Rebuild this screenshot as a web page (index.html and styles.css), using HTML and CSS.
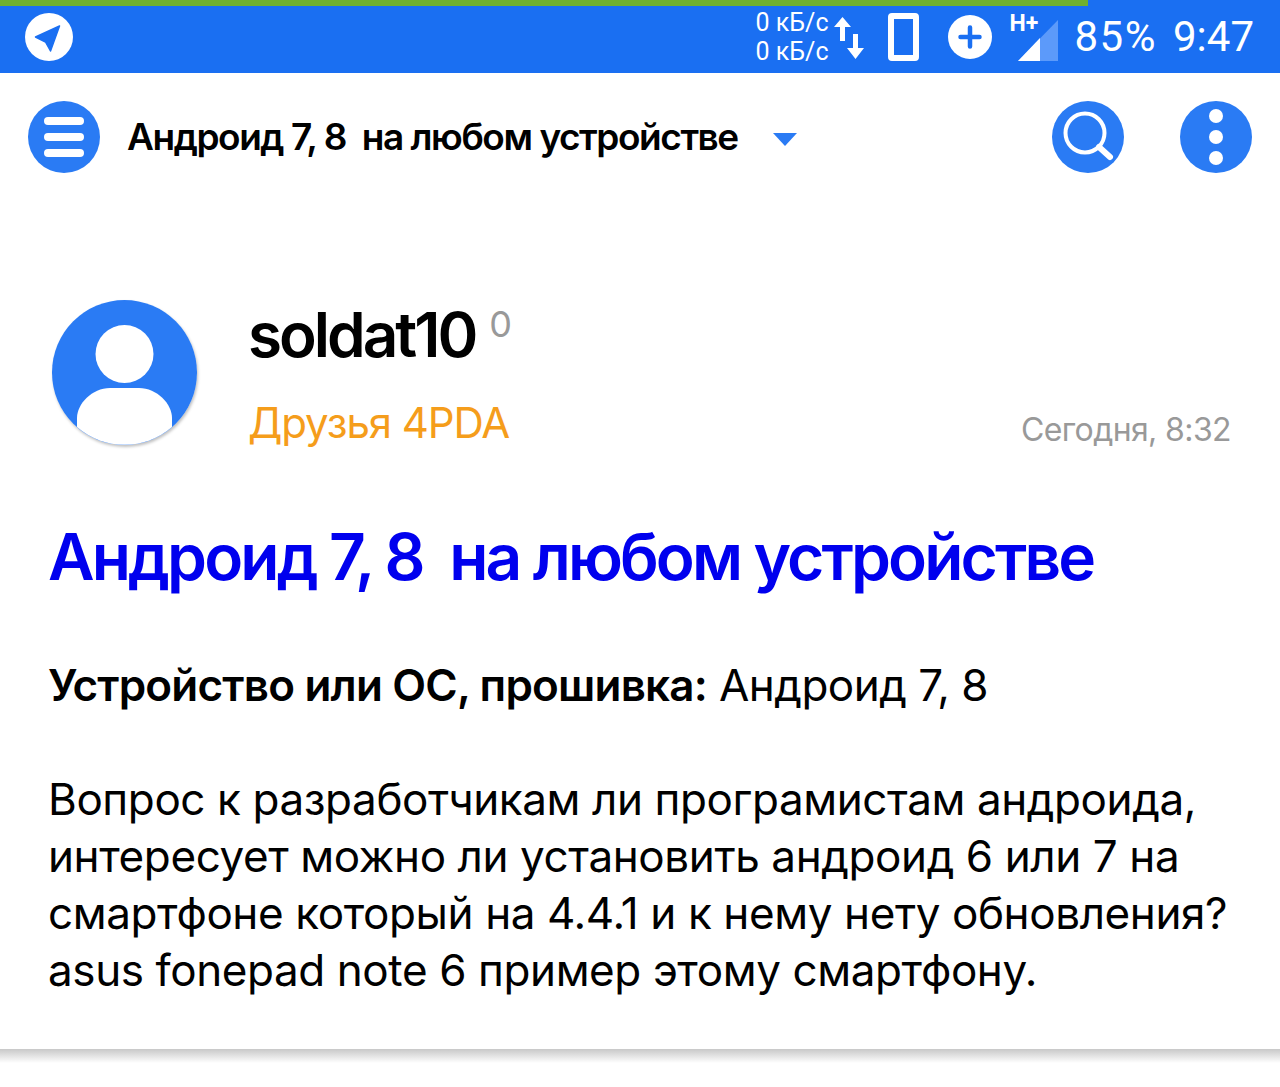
FILE: index.html
```html
<!DOCTYPE html>
<html lang="ru">
<head>
    <meta charset="UTF-8">
    <meta name="viewport" content="width=device-width, initial-scale=1.0">
    <title>Андроид 7, 8 на любом устройстве</title>
    <link rel="stylesheet" href="styles.css">
</head>
<body>
    <div class="status-bar">
        <div class="progress"><div class="progress-fill"></div></div>
        <div class="status-row">
            <svg class="status-nav" width="50" height="50" viewBox="0 0 50 50">
                <circle cx="25" cy="25" r="24" fill="#fff"/>
                <path d="M35.500 14 L11.500 25 L21.500 30 L26.500 39 Z" fill="#1a6ff2" stroke="#1a6ff2" stroke-width="1.500" stroke-linejoin="round"/>
            </svg>
            <div class="status-right">
                <div class="net-speed"><span>0 кБ/с</span><span>0 кБ/с</span></div>
                <svg class="net-arrows" width="30" height="44" viewBox="0 0 30 44">
                    <path d="M8.500 2 L17 12 H11 V26 H6 V12 H0 Z M19 19 H24 V33 H30 L21.500 44 L13 33 H19 Z" fill="#fff"/>
                </svg>
                <div class="phone-icon"></div>
                <svg class="saver-icon" width="44" height="44" viewBox="0 0 44 44">
                    <circle cx="22" cy="22" r="22" fill="#fff"/>
                    <path d="M22 12.500 V31.500 M12.500 22 H31.500" stroke="#1a6ff2" stroke-width="4.500" stroke-linecap="round"/>
                </svg>
                <div class="signal">
                    <span class="signal-type">H+</span>
                    <svg width="40" height="41" viewBox="0 0 40 41">
                        <path d="M40 0 V41 H0 Z" fill="#5c9afa"/>
                        <path d="M22 18 V41 H0 Z" fill="#fff"/>
                    </svg>
                </div>
                <span class="status-text percent">85%</span>
                <span class="status-text">9:47</span>
            </div>
        </div>
    </div>

    <div class="toolbar">
        <div class="round-btn menu-btn"><span></span><span></span><span></span></div>
        <div class="toolbar-title">Андроид 7, 8  на любом устройстве</div>
        <div class="dropdown-caret"></div>
        <div class="toolbar-actions">
            <div class="round-btn">
                <svg width="72" height="72" viewBox="0 0 72 72">
                    <circle cx="33" cy="32" r="19.500" fill="none" stroke="#fff" stroke-width="4"/>
                    <path d="M47 46 L58 56" stroke="#fff" stroke-width="6" stroke-linecap="round"/>
                </svg>
            </div>
            <div class="round-btn dots-btn"><span></span><span></span><span></span></div>
        </div>
    </div>

    <div class="post">
        <div class="post-head">
            <div class="avatar">
                <svg width="145" height="145" viewBox="0 0 145 145">
                    <circle cx="72.500" cy="72.500" r="72.500" fill="#2a7bf4"/>
                    <circle cx="72.500" cy="54" r="29" fill="#fff"/>
                    <path d="M25 127 V118 C25 104 40 88 58 88 H87 C105 88 120 104 120 118 V127 A72.500 72.500 0 0 1 25 127 Z" fill="#fff"/>
                </svg>
            </div>
            <div class="author">
                <div class="author-name">soldat10<sup class="author-rep">0</sup></div>
                <div class="author-group">Друзья 4PDA</div>
            </div>
            <div class="post-date">Сегодня, 8:32</div>
        </div>
        <h1 class="post-title">Андроид 7, 8  на любом устройстве</h1>
        <p class="post-device"><strong>Устройство или ОС, прошивка:</strong> Андроид 7, 8</p>
        <p class="post-text">Вопрос к разработчикам ли програмистам андроида,<br>интересует можно ли установить андроид 6 или 7 на<br>смартфоне который на 4.4.1 и к нему нету обновления?<br>asus fonepad note 6 пример этому смартфону.</p>
    </div>
    <div class="post-shadow"></div>
</body>
</html>
```

FILE: styles.css
```css
* {
    margin: 0;
    padding: 0;
    box-sizing: border-box;
}

body {
    font-family: Inter, Roboto, sans-serif;
    background: white;
    color: #000;
    overflow: hidden;
}

.status-bar {
    height: 73px;
    background: #1a6ff2;
    color: white;
    font-family: Roboto, sans-serif;
}

.progress {
    height: 6px;
}

.progress-fill {
    width: 85%;
    height: 100%;
    background: #6fb02f;
}

.status-row {
    display: flex;
    align-items: center;
    justify-content: space-between;
    padding: 0 26px 0 24px;
    height: 62px;
}

.status-right {
    display: flex;
    align-items: center;
}

.net-speed {
    display: flex;
    flex-direction: column;
    font-size: 25px;
    line-height: 29px;
    margin-right: 5px;
}

.net-arrows {
    margin-right: 24px;
}

.phone-icon {
    width: 31px;
    height: 48px;
    border: 6px solid white;
    border-radius: 4px;
    margin-right: 29px;
}

.saver-icon {
    margin-right: 18px;
}

.signal {
    position: relative;
    width: 48px;
    height: 48px;
    display: flex;
    align-items: flex-end;
    justify-content: flex-end;
    margin-right: 17px;
}

.signal-type {
    position: absolute;
    left: 0;
    top: 0;
    font-size: 23px;
    line-height: 22px;
    font-weight: 700;
}

.status-text {
    font-size: 42px;
    line-height: 48px;
}

.percent {
    letter-spacing: 1.500px;
}

.status-text + .status-text {
    margin-left: 16px;
}

.toolbar {
    display: flex;
    align-items: flex-start;
    padding: 28px 28px 0 28px;
    height: 128px;
}

.round-btn {
    width: 72px;
    height: 72px;
    border-radius: 50%;
    background: #2a7bf4;
    flex-shrink: 0;
}

.menu-btn {
    display: flex;
    flex-direction: column;
    align-items: center;
    justify-content: center;
    gap: 8px;
}

.menu-btn span {
    width: 40px;
    height: 8px;
    border-radius: 4px;
    background: white;
}

.dots-btn {
    display: flex;
    flex-direction: column;
    align-items: center;
    justify-content: center;
    gap: 7px;
}

.dots-btn span {
    width: 14px;
    height: 14px;
    border-radius: 50%;
    background: white;
}

.toolbar-title {
    font-size: 37px;
    line-height: 72px;
    font-weight: 600;
    white-space: pre;
    letter-spacing: -1.450px;
    margin-left: 27px;
}

.dropdown-caret {
    width: 0;
    height: 0;
    border-left: 12px solid transparent;
    border-right: 12px solid transparent;
    border-top: 13px solid #2a7bf4;
    margin: 32px 0 0 35px;
}

.toolbar-actions {
    display: flex;
    gap: 56px;
    margin-left: auto;
}

.post {
    padding: 99px 49px 0 48px;
}

.post-head {
    display: flex;
    align-items: flex-start;
    height: 145px;
}

.avatar {
    width: 145px;
    height: 145px;
    margin-left: 4px;
    border-radius: 50%;
    box-shadow: 1px 2px 3px rgba(0, 0, 0, 0.25);
    flex-shrink: 0;
}

.author {
    margin-left: 51px;
}

.author-name {
    font-size: 62px;
    line-height: 70px;
    font-weight: 600;
    letter-spacing: -3px;
}

.author-rep {
    font-size: 36px;
    font-weight: 400;
    color: #999;
    letter-spacing: 0;
    margin-left: 14px;
    vertical-align: 20px;
    line-height: 0;
}

.author-group {
    margin-top: 28px;
    font-size: 42px;
    line-height: 50px;
    color: #f59d1b;
    letter-spacing: -1.100px;
}

.post-date {
    margin-left: auto;
    margin-top: 110px;
    font-size: 32px;
    line-height: 40px;
    color: #999;
    letter-spacing: -0.600px;
}

.post-title {
    margin-top: 74px;
    font-size: 64px;
    line-height: 76px;
    font-weight: 600;
    color: #0000ee;
    white-space: pre;
    letter-spacing: -2.850px;
}

.post-device {
    margin-top: 62px;
    font-size: 44px;
    line-height: 57px;
    letter-spacing: -0.500px;
}

.post-device strong {
    font-weight: 600;
    letter-spacing: -0.800px;
}

.post-text {
    margin-top: 57px;
    font-size: 44px;
    line-height: 57px;
    letter-spacing: -0.400px;
    white-space: nowrap;
}

.post-shadow {
    margin-top: 50px;
    height: 14px;
    background: linear-gradient(#c8c8c8, #fff);
}
```
